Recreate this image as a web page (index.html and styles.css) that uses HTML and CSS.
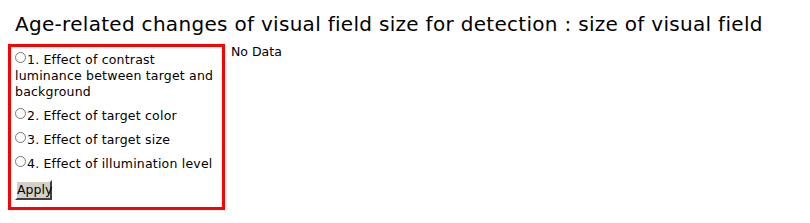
FILE: index.html
```html
<!DOCTYPE html>
<html>
<head>
  <meta charset="utf-8">
  <link rel="stylesheet" href="styles.css">
</head>
<body>
  <h1 class="page-title">Age-related changes of visual field size for detection : size of visual field</h1>
  <div class="layout">
    <form class="options">
      <label class="option"><input type="radio" name="effect" value="1">1. Effect of contrast luminance between target and background</label>
      <label class="option"><input type="radio" name="effect" value="2">2. Effect of target color</label>
      <label class="option"><input type="radio" name="effect" value="3">3. Effect of target size</label>
      <label class="option"><input type="radio" name="effect" value="4">4. Effect of illumination level</label>
      <button type="button" class="apply-button">Apply</button>
    </form>
    <div class="result">No Data</div>
  </div>
</body>
</html>
```

FILE: styles.css
```css
* {
  box-sizing: border-box;
}

body {
  margin: 8px;
  background: #fff;
  color: #000;
  font-family: "DejaVu Sans", sans-serif;
  font-size: 12.5px;
}

.page-title {
  margin: 0 0 7px 7px;
  padding-top: 3px;
  font-size: 20px;
  font-weight: normal;
  line-height: 26px;
  letter-spacing: 0.3px;
}

.layout {
  display: flex;
  align-items: flex-start;
  gap: 6px;
}

.options {
  width: 217px;
  border: 3px solid #ff0000;
  padding: 5px 3px 7px 4px;
  display: flex;
  flex-direction: column;
  align-items: flex-start;
  gap: 8px;
}

.option {
  line-height: 16px;
  letter-spacing: 0.2px;
}

.option input {
  width: 11px;
  height: 11px;
  margin: 0 1px 0 0;
  vertical-align: 1px;
}

.apply-button {
  font: inherit;
  padding: 0;
  width: 37px;
  height: 20px;
  background: #d4d0c8;
  border: 2px solid;
  border-color: #ffffff #404040 #404040 #ffffff;
  border-radius: 0;
  line-height: 16px;
}

.result {
  line-height: 16px;
}
```
